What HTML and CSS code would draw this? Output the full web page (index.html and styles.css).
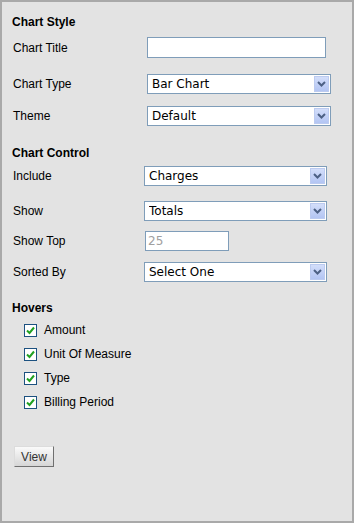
FILE: index.html
```html
<!DOCTYPE html>
<html lang="en">
<head>
  <meta charset="UTF-8">
  <title>Chart Options</title>
  <link rel="stylesheet" href="styles.css">
</head>
<body>

  <div class="panel">
    <h4 class="heading first">Chart Style</h4>

    <div class="row style-row r-title">
      <label>Chart Title</label>
      <input type="text" class="text-box wide">
    </div>
    <div class="row style-row r-type">
      <label>Chart Type</label>
      <div class="select-wrap">
        <select class="drop"><option>Bar Chart</option></select>
        <span class="arrow"><svg width="9" height="6" viewBox="0 0 9 6"><path d="M1 1 L4.5 4.5 L8 1" fill="none" stroke="#4d6185" stroke-width="2"/></svg></span>
      </div>
    </div>
    <div class="row style-row r-theme">
      <label>Theme</label>
      <div class="select-wrap">
        <select class="drop"><option>Default</option></select>
        <span class="arrow"><svg width="9" height="6" viewBox="0 0 9 6"><path d="M1 1 L4.5 4.5 L8 1" fill="none" stroke="#4d6185" stroke-width="2"/></svg></span>
      </div>
    </div>

    <h4 class="heading h-control">Chart Control</h4>

    <div class="row control-row r-include">
      <label>Include</label>
      <div class="select-wrap">
        <select class="drop"><option>Charges</option></select>
        <span class="arrow"><svg width="9" height="6" viewBox="0 0 9 6"><path d="M1 1 L4.5 4.5 L8 1" fill="none" stroke="#4d6185" stroke-width="2"/></svg></span>
      </div>
    </div>
    <div class="row control-row r-show">
      <label>Show</label>
      <div class="select-wrap">
        <select class="drop"><option>Totals</option></select>
        <span class="arrow"><svg width="9" height="6" viewBox="0 0 9 6"><path d="M1 1 L4.5 4.5 L8 1" fill="none" stroke="#4d6185" stroke-width="2"/></svg></span>
      </div>
    </div>
    <div class="row control-row r-top">
      <label>Show Top</label>
      <input type="text" class="text-box short" value="25" disabled>
    </div>
    <div class="row control-row r-sort">
      <label>Sorted By</label>
      <div class="select-wrap">
        <select class="drop"><option>Select One</option></select>
        <span class="arrow"><svg width="9" height="6" viewBox="0 0 9 6"><path d="M1 1 L4.5 4.5 L8 1" fill="none" stroke="#4d6185" stroke-width="2"/></svg></span>
      </div>
    </div>

    <h4 class="heading h-hovers">Hovers</h4>

    <div class="hovers">
      <div class="check-row"><span class="check"><svg width="11" height="11" viewBox="0 0 11 11"><path d="M2 5.5 L4.5 8 L9 2.5" fill="none" stroke="#21a121" stroke-width="2"/></svg></span>Amount</div>
      <div class="check-row"><span class="check"><svg width="11" height="11" viewBox="0 0 11 11"><path d="M2 5.5 L4.5 8 L9 2.5" fill="none" stroke="#21a121" stroke-width="2"/></svg></span>Unit Of Measure</div>
      <div class="check-row"><span class="check"><svg width="11" height="11" viewBox="0 0 11 11"><path d="M2 5.5 L4.5 8 L9 2.5" fill="none" stroke="#21a121" stroke-width="2"/></svg></span>Type</div>
      <div class="check-row"><span class="check"><svg width="11" height="11" viewBox="0 0 11 11"><path d="M2 5.5 L4.5 8 L9 2.5" fill="none" stroke="#21a121" stroke-width="2"/></svg></span>Billing Period</div>
    </div>

    <button class="view-btn">View</button>
  </div>

</body>
</html>
```

FILE: styles.css
```css
body {
  margin: 0;
  font-family: 'Liberation Sans', Arial, sans-serif;
  font-size: 12px;
  color: #000;
}

.panel {
  box-sizing: border-box;
  width: 354px;
  height: 523px;
  background: #e3e3e3;
  border: 2px solid #a9a9a9;
  padding: 0 10px;
}

.heading {
  margin: 0;
  font-size: 12px;
  font-weight: bold;
  line-height: 16px;
}

.heading.first { padding-top: 12px; }
.h-control { margin-top: 19px; }
.h-hovers { margin-top: 18px; }

.row {
  display: grid;
  align-items: center;
}

.row label {
  padding-left: 1px;
}

.style-row {
  grid-template-columns: 135px auto;
}

.control-row {
  grid-template-columns: 132px auto;
}

.r-title { margin-top: 7px; height: 21px; }
.r-type { margin-top: 16px; height: 20px; }
.r-theme { margin-top: 12px; height: 20px; }
.r-include { margin-top: 5px; height: 20px; }
.r-show { margin-top: 15px; height: 20px; }
.r-top { margin-top: 10px; height: 20px; }
.r-sort { margin-top: 11px; height: 20px; }

.text-box {
  box-sizing: border-box;
  border: 1px solid #7f9db9;
  background: #fff;
  padding: 0 2px;
  margin: 0;
  font-family: 'DejaVu Sans', Verdana, sans-serif;
  font-size: 12px;
  outline: none;
}

.text-box.wide {
  width: 179px;
  height: 21px;
}

.text-box.short {
  width: 84px;
  height: 20px;
  margin-left: 1px;
  color: #a0a0a0;
}

.select-wrap {
  position: relative;
  width: 183px;
  height: 20px;
}

.style-row .select-wrap {
  width: 184px;
}

.drop {
  appearance: none;
  -webkit-appearance: none;
  box-sizing: border-box;
  width: 100%;
  height: 20px;
  margin: 0;
  border: 1px solid #7f9db9;
  border-radius: 0;
  background: #fff;
  padding: 0 0 0 4px;
  font-family: 'DejaVu Sans', Verdana, sans-serif;
  font-size: 12px;
  color: #000;
}

.arrow {
  position: absolute;
  top: 2px;
  right: 2px;
  box-sizing: border-box;
  width: 15px;
  height: 16px;
  border: 1px solid #bccbf0;
  background: linear-gradient(#d3defa, #b3c5f3);
  display: flex;
  align-items: center;
  justify-content: center;
  pointer-events: none;
}

.hovers {
  margin-top: 2px;
  padding-left: 12px;
}

.check-row {
  display: flex;
  align-items: center;
  height: 24px;
}

.check {
  box-sizing: border-box;
  width: 13px;
  height: 13px;
  border: 1px solid #1c5180;
  background: #fff;
  display: flex;
  align-items: center;
  justify-content: center;
  margin-right: 7px;
}

.view-btn {
  display: block;
  box-sizing: border-box;
  margin: 32px 0 0 2px;
  width: 40px;
  height: 21px;
  padding: 0;
  border: 1px solid;
  border-color: #dcdcdc #707070 #707070 #dcdcdc;
  background: linear-gradient(#fafafa, #d6d6d6);
  font-family: 'Liberation Sans', Arial, sans-serif;
  font-size: 12px;
  color: #333;
}
```
